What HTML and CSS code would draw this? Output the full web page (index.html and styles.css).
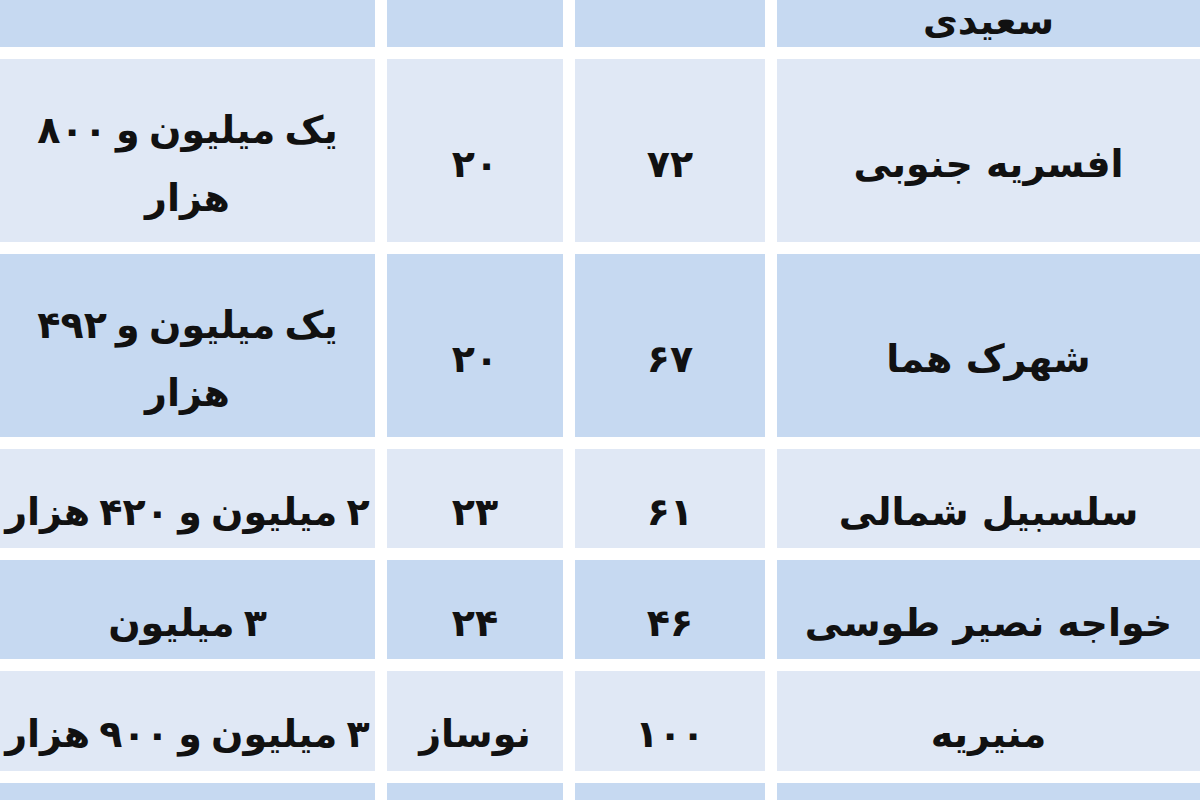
FILE: index.html
```html
<!DOCTYPE html>
<html lang="fa" dir="rtl">
<head>
<meta charset="utf-8">
<title>جدول قیمت</title>
<link rel="stylesheet" href="styles.css">
</head>
<body>
<div class="table">
  <div class="cell blue name top">سعیدی</div>
  <div class="cell blue"></div>
  <div class="cell blue"></div>
  <div class="cell blue"></div>

  <div class="cell light name">افسریه جنوبی</div>
  <div class="cell light">۷۲</div>
  <div class="cell light">۲۰</div>
  <div class="cell light price">یک میلیون و ۸۰۰<br>هزار</div>

  <div class="cell blue name">شهرک هما</div>
  <div class="cell blue">۶۷</div>
  <div class="cell blue">۲۰</div>
  <div class="cell blue price">یک میلیون و ۴۹۲<br>هزار</div>

  <div class="cell light name">سلسبیل شمالی</div>
  <div class="cell light">۶۱</div>
  <div class="cell light">۲۳</div>
  <div class="cell light price">۲ میلیون و ۴۲۰ هزار</div>

  <div class="cell blue name">خواجه نصیر طوسی</div>
  <div class="cell blue">۴۶</div>
  <div class="cell blue">۲۴</div>
  <div class="cell blue price">۳ میلیون</div>

  <div class="cell light name">منیریه</div>
  <div class="cell light">۱۰۰</div>
  <div class="cell light">نوساز</div>
  <div class="cell light price">۳ میلیون و ۹۰۰ هزار</div>

  <div class="cell blue"></div>
  <div class="cell blue"></div>
  <div class="cell blue"></div>
  <div class="cell blue"></div>
</div>
</body>
</html>
```

FILE: styles.css
```css
html, body {
  margin: 0;
  padding: 0;
  background: #ffffff;
  overflow: hidden;
  width: 1200px;
  height: 800px;
}

.table {
  direction: rtl;
  display: grid;
  grid-template-columns: 423px 190px 176px 375px;
  grid-template-rows: 70px 183px 183px 99px 99px 100px 17px;
  gap: 12px;
  margin-top: -23px;
  font-family: "DejaVu Sans", sans-serif;
  font-size: 38px;
  font-weight: bold;
  color: #111111;
}

.cell {
  display: flex;
  align-items: center;
  justify-content: center;
  text-align: center;
  white-space: nowrap;
  line-height: 68px;
  padding-top: 26px;
  box-sizing: border-box;
  overflow: hidden;
}

.price {
  word-spacing: -4px;
}

.blue {
  background: #c6d9f1;
}

.light {
  background: #e0e8f5;
}

.top {
  align-items: flex-end;
  padding-top: 0;
  padding-bottom: 0;
  line-height: 52px;
}
```
